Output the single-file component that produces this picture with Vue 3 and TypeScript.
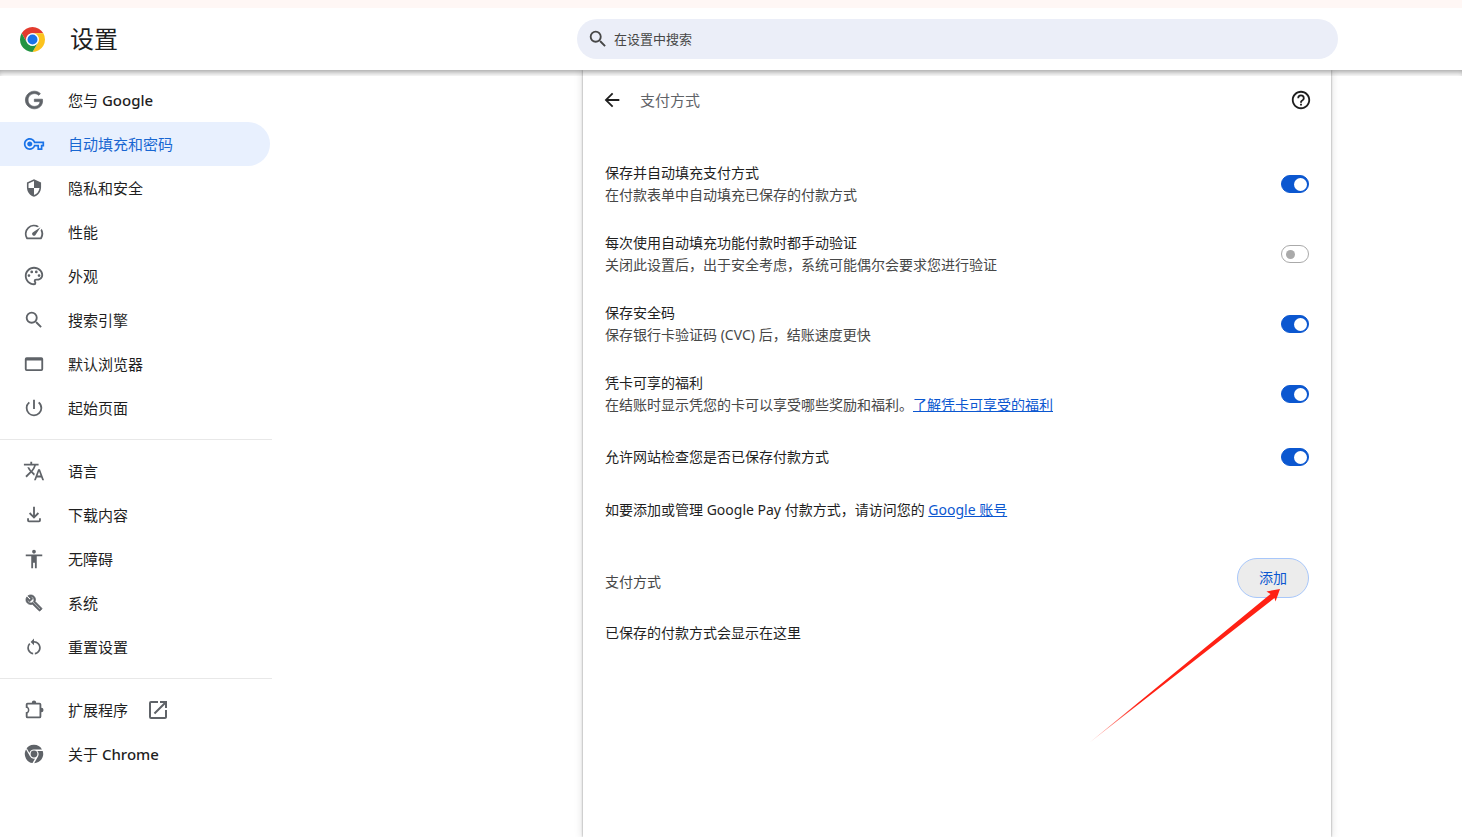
<script setup lang="ts">
import { ref } from 'vue'

interface NavItem {
  label: string
  latin?: string
  viewBox?: string
  path: string
  active?: boolean
  external?: boolean
  evenOdd?: boolean
  heavy?: boolean
}

interface Toggle {
  id: string
  title: string
  text?: string
  link?: string
  on: boolean
}

const full = '0 0 24 24'

const searchPath =
  'M15.5 14h-.79l-.28-.27A6.47 6.47 0 0 0 16 9.5 6.5 6.5 0 1 0 9.5 16c1.61 0 3.09-.59 4.23-1.57l.27.28v.79l5 4.99L20.49 19l-4.99-5zm-6 0C7.01 14 5 11.99 5 9.5S7.01 5 9.5 5 14 7.01 14 9.5 11.99 14 9.5 14z'

const groups: NavItem[][] = [
  [
    {
      label: '您与 ',
      latin: 'Google',
      heavy: true,
      viewBox: '-3 -3 30 30',
      path: 'M12.48 10.92v3.28h7.84c-.24 1.84-.853 3.187-1.787 4.133-1.147 1.147-2.933 2.4-6.053 2.4-4.827 0-8.6-3.893-8.6-8.72s3.773-8.72 8.6-8.72c2.6 0 4.507 1.027 5.907 2.347l2.307-2.307C18.747 1.44 16.133 0 12.48 0 5.867 0 .307 5.387.307 12s5.56 12 12.173 12c3.573 0 6.267-1.173 8.373-3.36 2.16-2.16 2.84-5.213 2.84-7.667 0-.76-.053-1.467-.173-2.053H12.48z',
    },
    {
      label: '自动填充和密码',
      active: true,
      viewBox: '-1 -1 26 26',
      path: 'M22 19h-6v-4h-2.68c-1.14 2.42-3.6 4-6.32 4-3.86 0-7-3.14-7-7s3.14-7 7-7c2.72 0 5.17 1.58 6.32 4H24v6h-2v4zm-4-2h2v-4h2v-2H11.94l-.23-.67C11.01 8.34 9.11 7 7 7c-2.76 0-5 2.24-5 5s2.24 5 5 5c2.11 0 4.01-1.34 4.71-3.33l.23-.67H18v4zM7 15c-1.65 0-3-1.35-3-3s1.35-3 3-3 3 1.35 3 3-1.35 3-3 3z',
    },
    {
      label: '隐私和安全',
      viewBox: '-2 -2 28 28',
      path: 'M12 1L3 5v6c0 5.55 3.84 10.74 9 12 5.16-1.26 9-6.45 9-12V5l-9-4zm0 10.99h7c-.53 4.12-3.28 7.79-7 8.94V12H5V6.3l7-3.11v8.8z',
    },
    {
      label: '性能',
      path: 'm20.38 8.57-1.23 1.85a8 8 0 0 1-.22 7.58H5.07A8 8 0 0 1 15.58 6.85l1.85-1.23A10 10 0 0 0 3.35 19a2 2 0 0 0 1.72 1h13.85a2 2 0 0 0 1.74-1 10 10 0 0 0-.27-10.44zm-9.79 6.84a2 2 0 0 0 2.83 0l5.66-8.49-8.49 5.66a2 2 0 0 0 0 2.83z',
    },
    {
      label: '外观',
      path: 'M12 22C6.49 22 2 17.51 2 12S6.49 2 12 2s10 4.04 10 9c0 3.31-2.69 6-6 6h-1.77c-.28 0-.5.22-.5.5 0 .12.05.23.13.33.41.47.64 1.06.64 1.67A2.5 2.5 0 0 1 12 22zm0-18c-4.41 0-8 3.59-8 8s3.59 8 8 8c.28 0 .5-.22.5-.5a.54.54 0 0 0-.14-.35c-.41-.46-.63-1.05-.63-1.65a2.5 2.5 0 0 1 2.5-2.5H16c2.21 0 4-1.79 4-4 0-3.86-3.59-7-8-7zM5 11.5a1.5 1.5 0 1 0 3 0a1.5 1.5 0 1 0-3 0zM8 7.5a1.5 1.5 0 1 0 3 0a1.5 1.5 0 1 0-3 0zM13 7.5a1.5 1.5 0 1 0 3 0a1.5 1.5 0 1 0-3 0zM16 11.5a1.5 1.5 0 1 0 3 0a1.5 1.5 0 1 0-3 0z',
    },
    { label: '搜索引擎', path: searchPath },
    {
      label: '默认浏览器',
      evenOdd: true,
      path: 'M4 4.5h16a2 2 0 0 1 2 2v11a2 2 0 0 1-2 2H4a2 2 0 0 1-2-2v-11a2 2 0 0 1 2-2zM4 8.2v9.5h16V8.2z',
    },
    {
      label: '起始页面',
      path: 'M13 3h-2v10h2V3zm4.83 2.17-1.42 1.42A6.92 6.92 0 0 1 19 12c0 3.87-3.13 7-7 7A6.995 6.995 0 0 1 7.58 6.58L6.17 5.17A8.932 8.932 0 0 0 3 12a9 9 0 0 0 18 0c0-2.74-1.23-5.18-3.17-6.83z',
    },
  ],
  [
    {
      label: '语言',
      path: 'M12.87 15.07l-2.54-2.51.03-.03A17.52 17.52 0 0 0 14.07 6H17V4h-7V2H8v2H1v1.99h11.17C11.5 7.92 10.44 9.75 9 11.35 8.07 10.32 7.3 9.19 6.69 8h-2c.73 1.63 1.73 3.17 2.98 4.56l-5.09 5.02L4 19l5-5 3.11 3.11.76-2.04zM18.5 10h-2L12 22h2l1.12-3h4.75L21 22h2l-4.5-12zm-2.62 7 1.62-4.33L19.12 17h-3.24z',
    },
    {
      label: '下载内容',
      path: 'M11 3h2v9.2l3.1-3.1 1.4 1.4L12 16l-5.500-5.500 1.400-1.400 3.100 3.100V3zM4.500 15.500h2V18h11v-2.500h2V18a2 2 0 0 1-2 2h-11a2 2 0 0 1-2-2v-2.500z',
    },
    {
      label: '无障碍',
      path: 'M12 2c1.1 0 2 .9 2 2s-.9 2-2 2-2-.9-2-2 .9-2 2-2zm9 7h-6v13h-2v-6h-2v6H9V9H3V7h18v2z',
    },
    {
      label: '系统',
      heavy: true,
      viewBox: '-3 -3 30 30',
      path: 'M22.61 18.99l-9.08-9.08c.93-2.34.45-5.1-1.44-7C9.79.61 6.21.4 3.66 2.26L7.5 6.11 6.08 7.52 2.25 3.69C.39 6.23.6 9.82 2.9 12.11c1.86 1.86 4.57 2.35 6.89 1.48l9.11 9.11c.39.39 1.02.39 1.41 0l2.3-2.3c.4-.38.4-1.01 0-1.41zm-3 1.6l-9.46-9.46c-.61.45-1.29.72-2 .82-1.36.2-2.79-.21-3.83-1.25C3.37 9.76 2.93 8.5 3 7.26l3.09 3.09 4.24-4.24-3.09-3.09c1.24-.07 2.49.37 3.44 1.31 1.08 1.08 1.49 2.57 1.24 3.96-.12.71-.42 1.37-.88 1.96l9.45 9.45-.88.89z',
    },
    {
      label: '重置设置',
      viewBox: '-1 -1 26 26',
      path: 'M12 5V2L8 6l4 4V7c3.31 0 6 2.69 6 6 0 2.97-2.17 5.43-5 5.91v2.02c3.95-.49 7-3.85 7-7.93 0-4.42-3.58-8-8-8zm-6 8c0-1.65.67-3.15 1.76-4.24L6.34 7.34A8.014 8.014 0 0 0 4 13c0 4.08 3.05 7.44 7 7.93v-2.02c-2.83-.48-5-2.94-5-5.91z',
    },
  ],
  [
    {
      label: '扩展程序',
      external: true,
      evenOdd: true,
      path: 'M5 4h4.6a2.4 2.4 0 0 1 4.8 0H18a2 2 0 0 1 2 2v3.6a2.4 2.4 0 0 1 0 4.8V19a2 2 0 0 1-2 2H5a2 2 0 0 1-2-2v-4.6a2.4 2.4 0 0 0 0-4.8V6a2 2 0 0 1 2-2zM5 6v2.3a4.4 4.4 0 0 1 0 7.4V19h13V6z',
    },
    {
      label: '关于 ',
      latin: 'Chrome',
      evenOdd: true,
      path: 'M8.3 12a3.7 3.7 0 1 0 7.4 0a3.7 3.7 0 1 0-7.4 0zM3.1 7.4A10 10 0 0 1 20.7 7H12A5.1 5.1 0 0 0 7 10.9L4.2 5.9zM21.5 8.7A10 10 0 0 1 12.2 22L16.5 14.4A5.1 5.1 0 0 0 15.6 8.7zM2.6 8.5A10 10 0 0 0 10.4 21.9L13.2 16.9A5.1 5.1 0 0 1 7.4 14.2L3.4 7.2z',
    },
  ],
]

const toggles = ref<Toggle[]>([
  { id: 'save', title: '保存并自动填充支付方式', text: '在付款表单中自动填充已保存的付款方式', on: true },
  { id: 'verify', title: '每次使用自动填充功能付款时都手动验证', text: '关闭此设置后，出于安全考虑，系统可能偶尔会要求您进行验证', on: false },
  { id: 'cvc', title: '保存安全码', text: '保存银行卡验证码 (CVC) 后，结账速度更快', on: true },
  { id: 'benefits', title: '凭卡可享的福利', text: '在结账时显示凭您的卡可以享受哪些奖励和福利。', link: '了解凭卡可享受的福利', on: true },
  { id: 'check', title: '允许网站检查您是否已保存付款方式', on: true },
])

const query = ref('')
</script>

<template>
  <div class="page">
    <div class="strip"></div>
    <header class="toolbar">
      <div class="brand">
        <svg class="logo" viewBox="0 0 24 24" aria-hidden="true">
          <path fill="#e33b2e" d="M1.61 6A12 12 0 0 1 22.39 6H12A6 6 0 0 0 6.8 15z" />
          <path fill="#fcc31e" d="M22.39 6A12 12 0 0 1 12 24L17.2 15A6 6 0 0 0 12 6z" />
          <path fill="#229342" d="M12 24A12 12 0 0 1 1.61 6L6.8 15A6 6 0 0 0 17.2 15z" />
          <circle cx="12" cy="12" r="6" fill="#fff" />
          <circle cx="12" cy="12" r="4.8" fill="#1a73e8" />
        </svg>
        <h1>设置</h1>
      </div>
      <label class="search">
        <svg class="icon" viewBox="0 0 24 24" aria-hidden="true"><path :d="searchPath" /></svg>
        <input v-model="query" type="search" placeholder="在设置中搜索" aria-label="在设置中搜索" />
      </label>
      <div class="toolbar-end"></div>
    </header>

    <div class="body">
      <div class="top-shadow"></div>
      <div class="side">
        <nav>
          <ul v-for="(group, g) in groups" :key="g">
            <li v-for="item in group" :key="item.label">
              <a href="#" :class="{ active: item.active }" :aria-current="item.active ? 'page' : undefined">
                <svg class="icon" :class="{ heavy: item.heavy }" :viewBox="item.viewBox ?? full" aria-hidden="true">
                  <path :d="item.path" :fill-rule="item.evenOdd ? 'evenodd' : 'nonzero'" />
                </svg>
                <span>{{ item.label }}<b v-if="item.latin">{{ item.latin }}</b></span>
                <svg v-if="item.external" class="external" viewBox="0 0 24 24" aria-hidden="true">
                  <path d="M19 19H5V5h7V3H5a2 2 0 0 0-2 2v14a2 2 0 0 0 2 2h14c1.1 0 2-.9 2-2v-7h-2v7zM14 3v2h3.59l-9.83 9.83 1.41 1.41L19 6.41V10h2V3h-7z" />
                </svg>
              </a>
            </li>
          </ul>
        </nav>
      </div>

      <main class="card">
        <div class="card-head">
          <button type="button" class="icon-button" aria-label="返回">
            <svg class="icon" viewBox="0 0 24 24" aria-hidden="true">
              <path d="M20 11H7.83l5.59-5.59L12 4l-8 8 8 8 1.41-1.41L7.83 13H20v-2z" />
            </svg>
          </button>
          <h2>支付方式</h2>
          <button type="button" class="icon-button" aria-label="帮助">
            <svg class="icon" viewBox="0 0 24 24" aria-hidden="true">
              <path d="M11 18h2v-2h-2v2zm1-16C6.48 2 2 6.48 2 12s4.48 10 10 10 10-4.48 10-10S17.52 2 12 2zm0 18c-4.41 0-8-3.59-8-8s3.59-8 8-8 8 3.59 8 8-3.59 8-8 8zm0-14a4 4 0 0 0-4 4h2c0-1.1.9-2 2-2s2 .9 2 2c0 2-3 1.75-3 5h2c0-2.25 3-2.5 3-5a4 4 0 0 0-4-4z" />
            </svg>
          </button>
        </div>

        <div v-for="t in toggles" :key="t.id" class="row" :class="{ single: !t.text }">
          <div>
            <label :for="t.id">{{ t.title }}</label>
            <p v-if="t.text" class="secondary">{{ t.text }}<a v-if="t.link" href="#">{{ t.link }}</a></p>
          </div>
          <input :id="t.id" v-model="t.on" type="checkbox" role="switch" class="switch" />
        </div>

        <p class="manage">如要添加或管理 Google Pay 付款方式，请访问您的 <a href="#">Google 账号</a></p>

        <div class="section-head">
          <h3>支付方式</h3>
          <div class="add-wrap">
            <button type="button" class="add">添加</button>
            <svg class="pointer" viewBox="0 0 192 156" aria-hidden="true">
              <defs>
                <linearGradient id="pointer-fill" gradientUnits="userSpaceOnUse" x1="0" y1="155" x2="50" y2="115">
                  <stop offset="0" stop-color="#ff2a1a" stop-opacity="0.3" />
                  <stop offset="1" stop-color="#ff2114" />
                </linearGradient>
              </defs>
              <path fill="url(#pointer-fill)" d="M191 1L177.5 3.5L181.5 6L0 155L185.5 10L186.5 13.5z" />
            </svg>
          </div>
        </div>
        <p class="empty">已保存的付款方式会显示在这里</p>
      </main>
      <div class="body-end"></div>
    </div>
  </div>
</template>

<style>
body {
  margin: 0;
  background: #fff;
}
</style>

<style scoped>
.page {
  display: flex;
  flex-direction: column;
  min-height: 100vh;
  background: #fff;
  color: #1f1f1f;
  font: 14px/22px "Noto Sans", "Noto Sans CJK SC", sans-serif;
}

h1,
h2,
h3,
p,
ul {
  margin: 0;
  padding: 0;
  font-weight: 400;
}

ul {
  list-style: none;
}

button {
  border: 0;
  background: none;
  color: inherit;
  font: inherit;
  cursor: pointer;
}

.icon {
  flex: none;
  display: block;
  width: 22px;
  height: 22px;
  fill: currentColor;
}

.icon.heavy {
  stroke: currentColor;
  stroke-width: 1px;
}

.strip {
  height: 8px;
  background: #fff7f5;
}

.toolbar {
  display: flex;
  align-items: center;
  height: 62px;
}

.brand {
  flex: 577 1 0;
  display: flex;
  align-items: center;
  gap: 25px;
}

.logo {
  width: 25px;
  height: 25px;
  margin-left: 20px;
}

h1 {
  font-size: 24px;
  line-height: 32px;
}

.search {
  flex: 0 1 761px;
  display: flex;
  align-items: center;
  gap: 5px;
  height: 40px;
  padding: 0 10px;
  box-sizing: border-box;
  border-radius: 20px;
  background: #ebeef8;
  color: #474747;
}

.search input {
  flex: 1;
  min-width: 0;
  padding: 0;
  border: 0;
  outline: 0;
  background: none;
  color: #1f1f1f;
  font: inherit;
  font-size: 13px;
  appearance: none;
}

.search input::placeholder {
  color: #474747;
  opacity: 1;
}

.toolbar-end {
  flex: 124 1 0;
}

.body {
  position: relative;
  flex: 1;
  display: flex;
  overflow: hidden;
}

.top-shadow {
  position: absolute;
  inset: 0 0 auto;
  height: 6px;
  box-shadow: inset 0 5px 6px -3px rgba(0, 0, 0, 0.4);
  pointer-events: none;
}

.side {
  flex: 583 1 0;
}

nav {
  width: 272px;
  padding-top: 8px;
}

ul + ul {
  margin-top: 9px;
  padding-top: 9px;
  border-top: 1px solid #e8e8e8;
}

nav a {
  display: flex;
  align-items: center;
  height: 44px;
  margin-right: 2px;
  padding-left: 23px;
  border-radius: 0 22px 22px 0;
  color: #1f1f1f;
  font-size: 15px;
  text-decoration: none;
}

nav b {
  font-weight: 500;
}

nav a .icon {
  margin-right: 23px;
  color: #5f6368;
}

nav a.active {
  background: #e8f0fe;
  color: #1967d2;
}

nav a.active .icon {
  color: #1a73e8;
}

.external {
  width: 24px;
  height: 24px;
  margin-left: 18px;
  fill: #5f6368;
}

.card {
  flex: 0 1 748px;
  box-sizing: border-box;
  padding: 0 22px;
  box-shadow: 0 0 2px rgba(0, 0, 0, 0.4), 0 0 8px 1px rgba(0, 0, 0, 0.12);
}

.body-end {
  flex: 131 1 0;
}

.card-head {
  display: flex;
  align-items: center;
  height: 60px;
  margin: 0 -3px 19px -4px;
}

.icon-button {
  flex: none;
  padding: 0;
}

h2 {
  flex: 1;
  margin-left: 17px;
  color: #5f6368;
  font-size: 15px;
}

.row {
  display: flex;
  align-items: center;
  justify-content: space-between;
  gap: 22px;
  min-height: 70px;
}

.row.single {
  min-height: 56px;
}

.row label {
  display: block;
}

.secondary {
  color: #474747;
}

.card a {
  color: #0b57d0;
}

.switch {
  appearance: none;
  flex: none;
  display: flex;
  align-items: center;
  width: 28px;
  height: 18px;
  margin: 0;
  padding: 0 4px;
  box-sizing: border-box;
  border: 1px solid #aaa;
  border-radius: 9px;
  background: #fff;
}

.switch::before {
  content: "";
  width: 9px;
  height: 9px;
  border-radius: 50%;
  background: #aaa;
}

.switch:checked {
  justify-content: flex-end;
  padding: 0 1px;
  border-color: #0b57d0;
  background: #0b57d0;
}

.switch:checked::before {
  width: 13px;
  height: 13px;
  background: #fff;
}

.manage {
  padding: 14px 0;
}

.section-head {
  display: flex;
  align-items: center;
  justify-content: space-between;
  margin-top: 23px;
}

h3 {
  padding-top: 8px;
  color: #474747;
  font-size: 14px;
}

.add-wrap {
  position: relative;
}

.add {
  display: block;
  height: 40px;
  padding: 0 21px;
  border: 1px solid #a8c7fa;
  border-radius: 20px;
  background: #ececec;
  color: #0b57d0;
}

.pointer {
  position: absolute;
  top: 30px;
  right: 28px;
  width: 192px;
  height: 156px;
  pointer-events: none;
}

.empty {
  padding: 24px 0;
}
</style>
